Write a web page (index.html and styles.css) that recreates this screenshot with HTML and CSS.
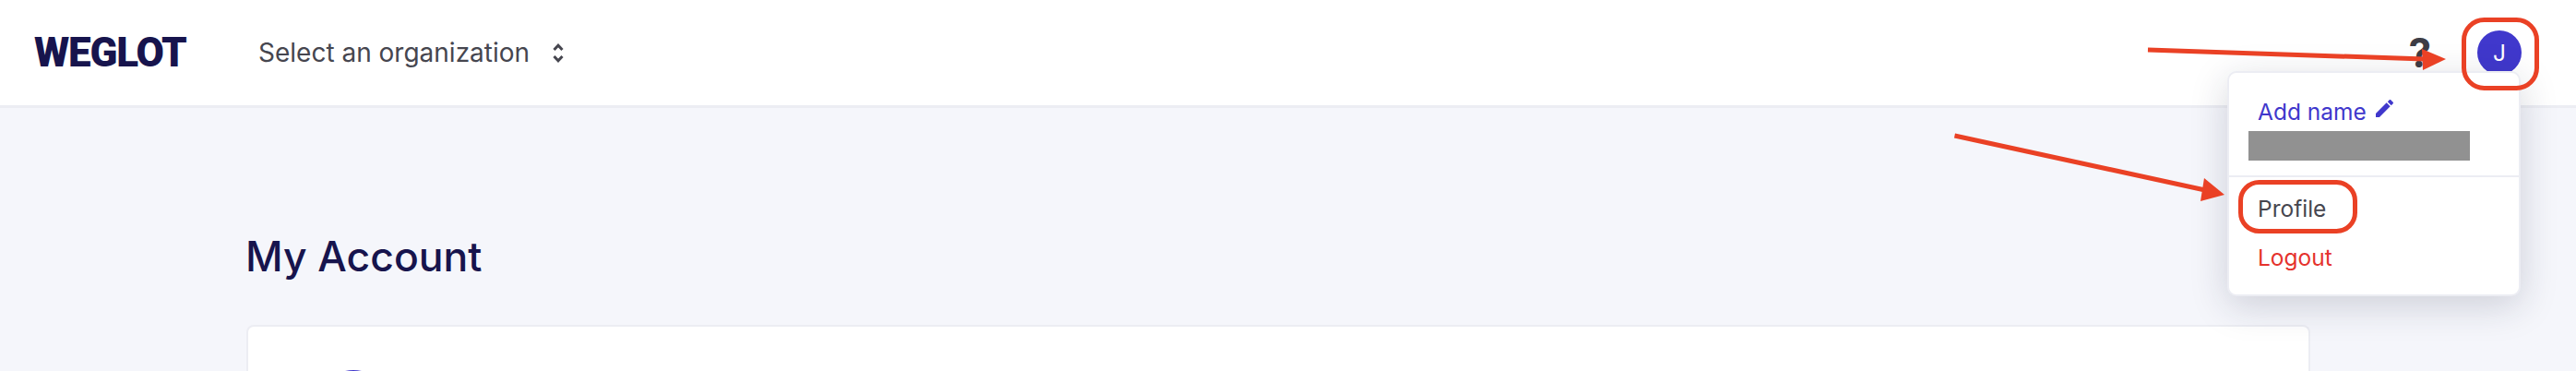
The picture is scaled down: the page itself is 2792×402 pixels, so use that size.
FILE: index.html
```html
<!DOCTYPE html>
<html lang="en">
<head>
  <meta charset="UTF-8" />
  <title>My Account - Weglot</title>
  <link rel="stylesheet" href="styles.css">
</head>
<body>
  <header class="topbar">
    <a href="#" class="logo">WEGLOT</a>
    <button class="org-select">
      <span>Select an organization</span>
      <svg class="chevrons" viewBox="0 0 12 21" fill="none" stroke="currentColor" stroke-width="3">
        <path d="M1.5 7 6 2.2 10.5 7"/>
        <path d="M1.5 14 6 18.8 10.5 14"/>
      </svg>
    </button>
    <div class="topbar-right">
      <span class="help">?</span>
      <span class="avatar">J</span>
    </div>
  </header>

  <main class="content">
    <h1>My Account</h1>
    <section class="card">
      <span class="card-avatar"></span>
    </section>
  </main>

  <!-- user menu -->
  <div class="user-menu">
    <div class="user-info">
      <a href="#" class="add-name">Add name
        <svg class="pencil" viewBox="3 3 18 18" fill="currentColor">
          <path d="M3 17.25V21h3.75L17.81 9.94l-3.75-3.75L3 17.25zM20.71 7.04c.39-.39.39-1.02 0-1.41l-2.34-2.34c-.39-.39-1.02-.39-1.41 0l-1.83 1.83 3.75 3.75 1.83-1.83z"/>
        </svg>
      </a>
      <div class="redacted"></div>
    </div>
    <div class="user-links">
      <a href="#" class="menu-link">Profile</a>
      <a href="#" class="menu-link logout">Logout</a>
    </div>
  </div>

  <!-- annotations drawn on top of the screenshot -->
  <svg class="annotations" viewBox="0 0 2792 402" fill="none">
    <path d="M2328 54 2628 64" stroke="#ea4125" stroke-width="5"/>
    <path d="M2651 64 2625 53 2626 76Z" fill="#ea4125"/>
    <rect x="2670.5" y="21.5" width="79" height="74" rx="22" stroke="#ea4125" stroke-width="5"/>
    <path d="M2118.5 147 2390 206" stroke="#ea4125" stroke-width="5"/>
    <path d="M2411 211 2389 193 2385 218Z" fill="#ea4125"/>
    <rect x="2428.5" y="197.5" width="124" height="53" rx="20" stroke="#ea4125" stroke-width="5"/>
  </svg>
</body>
</html>
```

FILE: styles.css
```css
* {
  box-sizing: border-box;
}

html, body {
  height: 402px;
}

body {
  margin: 0;
  overflow: hidden;
  position: relative;
  background-color: #f5f6fb;
  font-family: Inter, 'Noto Sans', sans-serif;
}

.topbar {
  display: flex;
  align-items: center;
  height: 117px;
  padding: 0 59px 0 37px;
  background: #fff;
  border-bottom: 3px solid #ecedf3;
}

.logo {
  width: 163px;
  font-family: Roboto, sans-serif;
  font-weight: 900;
  font-size: 44px;
  line-height: 1;
  letter-spacing: -1.2px;
  white-space: nowrap;
  color: #17144d;
  text-decoration: none;
}

.org-select {
  display: flex;
  align-items: center;
  gap: 25px;
  margin-left: 80px;
  padding: 0;
  border: none;
  background: none;
  font-family: inherit;
  font-size: 28px;
  color: #46464f;
}

.chevrons {
  width: 12px;
  height: 21px;
}

.topbar-right {
  display: flex;
  align-items: center;
  gap: 50px;
  margin-left: auto;
}

.help {
  font-size: 44px;
  font-weight: 700;
  line-height: 1;
  color: #3d3d46;
}

.avatar {
  display: flex;
  align-items: center;
  justify-content: center;
  width: 48px;
  height: 48px;
  border-radius: 50%;
  background: #4038cc;
  color: #fff;
  font-size: 24.5px;
}

.content {
  padding: 0 288px 0 267px;
}

h1 {
  margin: 0 0 0 -1px;
  padding-top: 134px;
  font-size: 44.5px;
  font-weight: 450;
  line-height: 54px;
  color: #17144d;
}

.card {
  height: 50px;
  margin-top: 47px;
  padding: 47px 0 0 74px;
  overflow: hidden;
  background: #fff;
  border: 2px solid #ecedf3;
  border-bottom: none;
  border-radius: 8px 8px 0 0;
}

.card-avatar {
  display: block;
  width: 80px;
  height: 80px;
  border-radius: 50%;
  background: #4038cc;
}

.user-menu {
  position: absolute;
  top: 77px;
  left: 2414px;
  width: 318px;
  height: 244px;
  background: #fff;
  border: 2px solid #ecedf3;
  border-radius: 10px;
  box-shadow: 0 10px 40px rgba(30, 35, 60, 0.18);
}

.user-info {
  height: 113px;
  padding: 24px 0 0 21px;
  border-bottom: 2px solid #ecedf3;
}

.add-name {
  display: flex;
  align-items: center;
  gap: 10px;
  height: 36px;
  padding-left: 10px;
  font-size: 24.5px;
  color: #4038cc;
  text-decoration: none;
}

.pencil {
  width: 19px;
  height: 19px;
  margin-top: -8px;
}

.redacted {
  width: 240px;
  height: 32px;
  margin-top: 3px;
  background: #919191;
}

.user-links {
  display: flex;
  flex-direction: column;
  gap: 21px;
  padding: 18px 0 0 31px;
}

.menu-link {
  font-size: 24.5px;
  line-height: 32px;
  color: #46464f;
  text-decoration: none;
}

.logout {
  color: #e5322d;
}

.annotations {
  position: absolute;
  top: 0;
  left: 0;
  width: 2792px;
  height: 402px;
  pointer-events: none;
}
```
